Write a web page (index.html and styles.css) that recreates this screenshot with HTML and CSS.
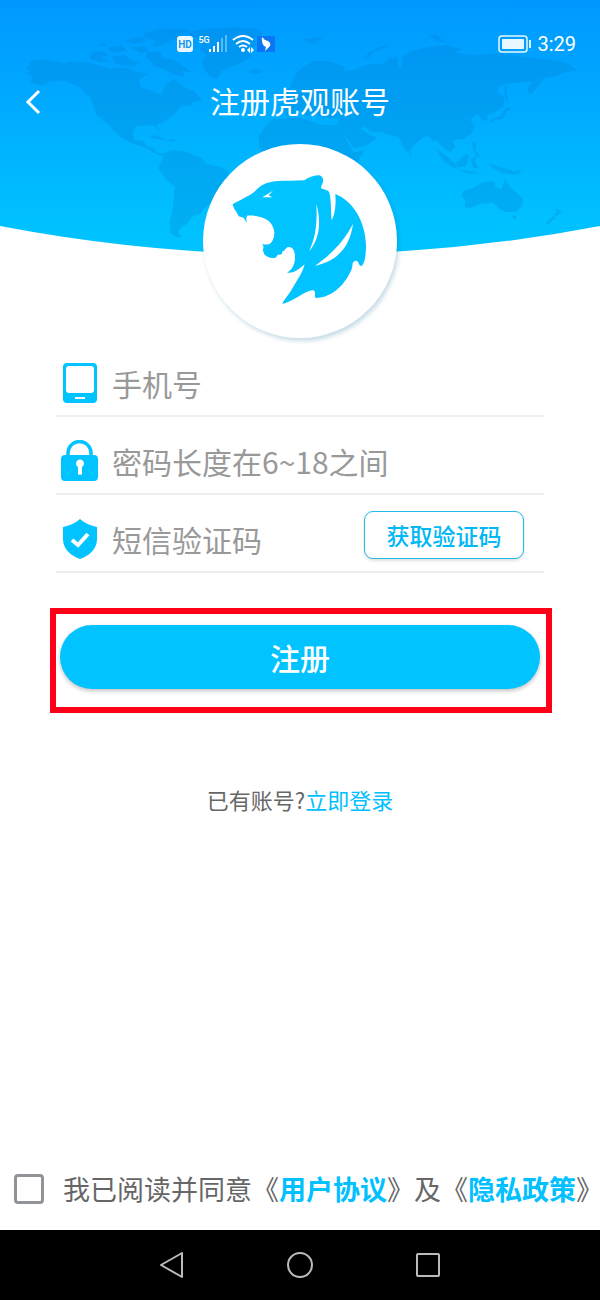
FILE: index.html
```html
<!DOCTYPE html>
<html lang="zh-CN">
	<head>
		<meta charset="utf-8">
		<meta name="viewport" content="width=device-width,initial-scale=1">
		<title>注册虎观账号</title>
		<link rel="stylesheet" href="styles.css">
	</head>
	<body>
		<header class="header">
			<svg class="header-bg" viewBox="0 0 1800 780" preserveAspectRatio="none" aria-hidden="true">
				<defs>
					<linearGradient id="sky" x1="0" y1="0" x2="0" y2="1">
						<stop offset="0" stop-color="#0098ff"/>
						<stop offset=".25" stop-color="#00a3ff"/>
						<stop offset=".85" stop-color="#00c0ff"/>
						<stop offset="1" stop-color="#00c3ff"/>
					</linearGradient>
				</defs>
				<path fill="url(#sky)" d="M0 0H1800V678Q900 850 0 678Z"/>
				<g class="land">
					<!-- 北美 -->
					<path d="M85 185L130 178L190 190L215 184L270 188L330 205L380 203L412 216L445 222L416 238L422 262L460 272L468 280L486 282L496 254L520 236L534 246L552 262L578 270L606 300L572 308L578 318L545 316L530 335L500 360L470 376L480 396L460 376L410 378L397 400L404 420L430 424L440 438L462 446L470 458L495 462L480 468L440 445L395 430L360 410L330 378L320 370L290 345L272 295L240 262L190 240L150 246L125 258L85 246L100 232L78 220L96 212L75 206L92 196Z"/>
					<path d="M275 158L310 152L325 168L300 172L330 184L300 186L270 176ZM330 140L365 136L380 150L350 158L322 150ZM290 136L318 128L320 138ZM375 122L420 112L440 122L400 132ZM395 142L430 138L450 152L420 160ZM335 168L372 164L395 182L420 186L400 200L345 192ZM430 100L480 88L540 86L575 92L540 102L560 112L520 118L490 134L455 140L470 122L430 112ZM440 158L480 154L490 176L520 178L560 206L574 216L545 214L555 228L520 224L490 206L460 198L450 180L436 172Z"/>
					<path d="M445 412L470 406L498 420L470 416ZM500 420L528 418L522 426Z"/>
					<!-- 格陵兰 -->
					<path d="M560 100L620 86L700 82L770 86L790 100L762 114L768 136L740 154L756 168L722 190L690 200L664 214L652 238L630 230L612 208L606 182L620 164L600 150L606 128L590 116ZM744 212L772 206L790 214L770 222L750 218Z"/>
					<!-- 南美 -->
					<path d="M490 462L515 450L555 454L580 464L605 474L620 492L665 502L684 515L680 545L662 572L650 598L615 622L600 642L575 652L562 672L544 682L534 696L546 710L530 712L512 700L508 670L518 630L524 560L500 540L474 505L484 486Z"/>
					<!-- 非洲 -->
					<path d="M778 440L776 408L800 372L820 358L900 352L960 374L1020 376L1034 410L1060 456L1092 452L1076 482L1040 520L900 500L790 460Z"/>
					<!-- 欧亚 -->
					<path d="M900 208L938 184L980 182L1038 202L1030 212L1060 210L1098 194L1150 192L1166 176L1192 168L1196 200L1204 204L1206 174L1230 154L1290 140L1340 134L1384 148L1362 158L1420 166L1500 160L1560 170L1640 178L1700 188L1734 210L1690 218L1670 228L1630 236L1612 262L1590 286L1582 268L1598 242L1560 248L1514 252L1496 262L1490 274L1512 290L1510 320L1484 336L1462 346L1460 362L1444 358L1434 342L1420 352L1410 360L1424 374L1416 398L1392 416L1358 420L1366 440L1352 456L1338 450L1320 432L1312 420L1300 424L1286 408L1270 412L1240 436L1226 458L1214 450L1196 412L1160 402L1144 396L1118 396L1094 380L1080 384L1104 402L1130 412L1104 434L1062 446L1034 404L1010 376L1020 358L962 350L942 338L920 350L900 330L862 350L850 330L864 312L840 290L870 262L880 232Z"/>
					<path d="M1090 178L1108 156L1142 140L1176 136L1120 156L1104 176ZM908 118L950 112L972 116L946 124L940 134ZM1286 108L1310 104L1320 116L1344 128L1318 124ZM1512 260L1520 262L1524 300L1516 304ZM1518 324L1536 322L1520 336L1508 358L1484 360L1464 370L1474 358L1500 348ZM1224 456L1236 462L1232 470Z"/>
					<path d="M1308 444L1342 470L1374 500L1360 504L1328 480ZM1372 506L1410 514L1440 520L1400 520ZM1366 488L1398 462L1408 468L1396 500L1376 502ZM1412 476L1434 466L1424 484L1436 502L1420 504ZM1416 424L1430 430L1426 452L1442 470L1430 472L1418 446ZM1466 490L1490 498L1534 510L1552 526L1526 522L1508 520L1478 504ZM1540 514L1566 510L1556 522Z"/>
					<!-- 澳洲 -->
					<path d="M1388 574L1420 564L1446 548L1476 542L1488 550L1484 560L1504 568L1516 536L1530 560L1550 578L1570 596L1566 618L1548 636L1516 636L1494 624L1480 608L1440 612L1410 624L1394 622L1396 602L1386 588ZM1534 646L1550 648L1544 660ZM1664 624L1686 636L1670 648L1660 644L1672 636ZM1636 670L1660 648L1668 652L1646 672Z"/>
				</g>
			</svg>
			<div class="status-bar">
				<div class="status-left">
					<svg width="100" height="20" viewBox="0 0 100 20" role="img" aria-label="信号">
						<rect x="1" y="2" width="16" height="16" rx="3" fill="#eaf7ff"/>
						<text x="9" y="14" class="hd">HD</text>
						<text x="28" y="9" class="net">5G</text>
						<path d="M34 15V18M38 12V18M42 8V18" stroke="#fff" stroke-width="2"/>
						<path d="M46 4V18M50 1V18" stroke="#fff" stroke-width="2" opacity=".35"/>
						<g fill="none" stroke="#fff" stroke-width="2">
							<path d="M57 6Q67 -2 77 6M60 10Q67 4 74 10M63 13Q67 10 71 13"/>
						</g>
						<circle cx="67" cy="16" r="2" fill="#fff"/>
						<path d="M74 13L71 16L74 19ZM75 13L78 16L75 19Z" fill="#fff"/>
						<path d="M81 2H99V18H81Z" fill="#0a75f5"/>
						<path d="M86 3Q88 6 92 7Q95 9 94 12L89 17L90 13L88 12Q85 8 86 3Z" fill="#fff"/>
					</svg>
				</div>
				<div class="status-right">
					<svg width="34" height="18" viewBox="0 0 34 18" role="img" aria-label="电量">
						<rect x="2" y="1" width="28" height="16" rx="3" fill="none" stroke="#e8f7ff" stroke-width="1.5"/>
						<rect x="5" y="4" width="22" height="10" rx="1" fill="#e8f7ff"/>
						<path d="M33 5V13" stroke="#e8f7ff" stroke-width="2"/>
					</svg>
					<span>3:29</span>
				</div>
			</div>
			<div class="title-bar">
				<button class="back" type="button" aria-label="返回">
					<svg width="16" height="26" viewBox="0 0 16 26"><path d="M14 2L3 13L14 24" fill="none" stroke="#fff" stroke-width="3"/></svg>
				</button>
				<h1>注册虎观账号</h1>
			</div>
			<div class="logo">
				<svg viewBox="33 27 582 582" role="img" aria-label="虎观">
					<path fill="#00c3ff" d="M122 208C145 194 172 184 189 169C204 152 222 142 250 139C280 136 310 138 337 136C350 126 370 119 382 121C395 125 396 140 389 150L387 160C396 164 405 164 411 170C418 190 416 225 419 256C431 235 432 200 430 177C480 197 520 255 522 330C522 360 518 388 508 393C498 391 502 377 491 377C478 379 484 392 478 405C460 445 425 488 370 489C368 480 372 470 364 466C345 462 310 497 271 507C275 495 290 480 300 462C322 425 332 412 338 388C325 400 305 417 285 413C300 405 308 390 309 370C310 350 303 335 290 336C279 338 281 348 270 350C272 362 262 358 256 360C252 372 245 369 235 368C221 364 214 358 215 350C207 345 222 340 209 325C215 331 222 328 231 328C241 322 247 310 247 292C243 258 215 240 165 242Q161 252 165 265L155 248L140 244C134 228 125 224 122 208Z"/>
					<path fill="#fff" d="M211 187L243 167L230 181L241 187ZM373 207C376 262 372 305 351 349C382 315 389 260 373 207ZM483 267C459 310 430 350 369 392C425 381 472 347 483 267Z"/>
				</svg>
			</div>
		</header>
		<main>
			<form class="register">
				<div class="row">
					<label for="phone" aria-label="手机号">
						<svg width="38" height="42" viewBox="0 0 38 42"><path fill="#00c3ff" fill-rule="evenodd" d="M7 1H33Q37 1 37 5V37Q37 41 33 41H7Q3 41 3 37V5Q3 1 7 1ZM9 4Q6 4 6 7V28Q6 31 9 31H31Q34 31 34 28V7Q34 4 31 4ZM15 35V37H25V35Z"/></svg>
					</label>
					<input id="phone" type="tel" placeholder="手机号">
				</div>
				<div class="row">
					<label for="password" aria-label="密码">
						<svg width="38" height="42" viewBox="0 0 38 42">
							<path d="M8 17V13A11 11 0 0 1 31 13V17" fill="none" stroke="#00c3ff" stroke-width="3.5"/>
							<rect x="1" y="15" width="37" height="26" rx="4" fill="#00c3ff"/>
							<path fill="#fff" d="M18 34V27A4 4 0 1 1 22 27V34Q20 36 18 34Z"/>
						</svg>
					</label>
					<input id="password" type="password" placeholder="密码长度在6~18之间">
				</div>
				<div class="row">
					<label for="code" aria-label="短信验证码">
						<svg width="38" height="42" viewBox="0 0 38 42">
							<path fill="#00c3ff" d="M20 1Q27 7 37 9V22Q36 35 20 41Q4 35 3 22V9Q13 7 20 1Z"/>
							<path d="M12 22L18 27L28 16" fill="none" stroke="#fff" stroke-width="4"/>
						</svg>
					</label>
					<input id="code" type="text" placeholder="短信验证码">
					<button class="get-code" type="button">获取验证码</button>
				</div>
				<div class="mark">
					<button class="submit" type="submit">注册</button>
				</div>
			</form>
			<p class="login">已有账号?<a href="#login">立即登录</a></p>
		</main>
		<div class="agree">
			<input id="agree" type="checkbox">
			<label for="agree">我已阅读并同意《<a href="#user">用户协议</a>》及《<a href="#privacy">隐私政策</a><span class="end">》</span></label>
		</div>
		<nav class="nav">
			<button type="button" aria-label="后退"><svg width="26" height="26" viewBox="0 0 26 26"><path d="M23 1V25L2 13Z"/></svg></button>
			<button type="button" aria-label="主页"><svg width="26" height="26" viewBox="0 0 26 26"><circle cx="13" cy="13" r="12"/></svg></button>
			<button type="button" aria-label="任务"><svg width="26" height="26" viewBox="0 0 26 26"><rect x="2" y="2" width="22" height="22" rx="1"/></svg></button>
		</nav>
	</body>
</html>
```
FILE: styles.css
```css
* {margin: 0;padding: 0;box-sizing: border-box;}
body {display: flex;flex-direction: column;min-height: 100vh;background: #fff;overflow-x: hidden;
	font-family: "Noto Sans CJK SC", sans-serif;color: #666;}
a {color: #00c0ff;text-decoration: none;}
button {border: 0;background: none;font-family: inherit;cursor: pointer;}
svg {display: block;}

.header {position: relative;padding-bottom: 1px;color: #fff;}
.header-bg {position: absolute;z-index: -1;top: 0;left: 0;width: 100%;height: 260px;}
.land {fill: #0080d0;opacity: .27;}
.status-bar {display: flex;justify-content: space-between;align-items: center;height: 64px;padding: 24px 24px 0 176px;}
.status-right {display: flex;align-items: center;gap: 6px;font: 20px/24px Roboto, sans-serif;}
.hd {font: bold 10px Roboto, sans-serif;fill: #1595ea;text-anchor: middle;}
.net {font: 500 9px Roboto, sans-serif;fill: #fff;text-anchor: middle;}
.title-bar {display: grid;grid-template-columns: 64px 1fr 64px;align-items: center;height: 76px;}
.back {width: 64px;padding-left: 25px;}
.title-bar h1 {padding-bottom: 4px;font-size: 30px;font-weight: normal;line-height: 40px;text-align: center;}
.logo {width: 194px;height: 194px;margin: 4px auto 0;border-radius: 50%;background: #fff;overflow: hidden;
	box-shadow: 2px 3px 4px rgba(0, 100, 150, .22);}

.register .row {display: flex;align-items: center;height: 78px;margin: 0 56px;padding: 12px 20px 0 4px;border-bottom: 2px solid #eee;}
.row input {flex: 1;min-width: 0;height: 56px;margin-left: 14px;border: 0;outline: 0;background: none;
	font: 30px "Noto Sans CJK SC", sans-serif;color: #333;}
.row input::placeholder {color: #999;opacity: 1;}
.get-code {width: 160px;height: 48px;margin-bottom: 8px;border: 1px solid #20bbe8;border-radius: 9px;background: #fff;
	box-shadow: 0 2px 3px rgba(0, 0, 0, .12);font-size: 23px;font-weight: 500;color: #00b8f5;}
.mark {margin: 35px 48px 0 50px;padding: 11px 6px 18px 4px;border: 6px solid #ff0019;}
.submit {display: block;width: 100%;height: 64px;border-radius: 32px;background: #00c3ff;
	box-shadow: 0 2px 4px rgba(0, 0, 0, .25);font-size: 30px;font-weight: 500;color: #fff;}
.login {margin-top: 70px;font-size: 22px;line-height: 32px;text-align: center;}

.agree {display: flex;align-items: center;height: 82px;margin-top: auto;padding-left: 14px;gap: 19px;}
.agree input {flex: none;width: 30px;height: 30px;border: 3px solid #909499;border-radius: 4px;background: #fff;appearance: none;}
.agree input:checked {background: #00c3ff;}
.agree label {font-size: 27px;line-height: 40px;white-space: nowrap;}
.agree a {font-weight: bold;}
.agree .end {font-feature-settings: "halt";}
.nav {display: flex;justify-content: center;align-items: center;gap: 102px;height: 70px;background: #000;}
.nav svg {fill: none;stroke: #bbb;stroke-width: 2;stroke-linejoin: round;}
```
